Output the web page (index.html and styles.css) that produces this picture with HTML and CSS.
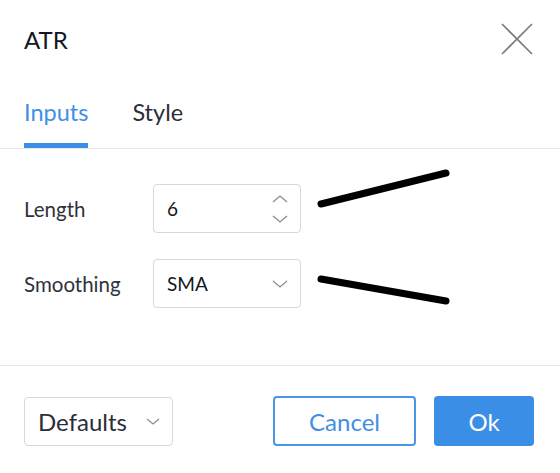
FILE: index.html
```html
<!DOCTYPE html>
<html lang="en">
<head>
<meta charset="utf-8">
<title>ATR</title>
<link rel="stylesheet" href="styles.css">
</head>
<body>
<div class="dialog">
  <header class="head">
    <h1 class="title">ATR</h1>
    <button class="close" aria-label="Close">
      <svg width="32" height="32" viewBox="0 0 32 32"><path d="M1 1 L31 31 M31 1 L1 31" stroke="#7a7a7a" stroke-width="1.6" fill="none"/></svg>
    </button>
  </header>
  <nav class="tabs">
    <span class="tab active">Inputs</span>
    <span class="tab">Style</span>
  </nav>
  <section class="content">
    <div class="row">
      <label class="label">Length</label>
      <div class="field">
        <span class="value">6</span>
        <span class="spinner">
          <svg width="16" height="8" viewBox="0 0 16 8"><path d="M1 7 L8 1 L15 7" stroke="#8a8d96" stroke-width="1.3" fill="none"/></svg>
          <svg width="16" height="8" viewBox="0 0 16 8"><path d="M1 1 L8 7 L15 1" stroke="#8a8d96" stroke-width="1.3" fill="none"/></svg>
        </span>
      </div>
    </div>
    <div class="row">
      <label class="label">Smoothing</label>
      <div class="field">
        <span class="value">SMA</span>
        <svg class="chev" width="16" height="8" viewBox="0 0 16 8"><path d="M1 1 L8 7 L15 1" stroke="#8a8d96" stroke-width="1.3" fill="none"/></svg>
      </div>
    </div>
  </section>
  <footer class="foot">
    <div class="defaults">
      <span>Defaults</span>
      <svg class="chev" width="14" height="7" viewBox="0 0 14 7"><path d="M1 1 L7 6 L13 1" stroke="#8a8d96" stroke-width="1.3" fill="none"/></svg>
    </div>
    <div class="actions">
      <button class="btn cancel">Cancel</button>
      <button class="btn ok">Ok</button>
    </div>
  </footer>
  <svg class="scribble" width="560" height="473" viewBox="0 0 560 473">
    <path d="M321 204 L446 173" stroke="#000" stroke-width="7" stroke-linecap="round" fill="none"/>
    <path d="M321 279 L446 301" stroke="#000" stroke-width="7" stroke-linecap="round" fill="none"/>
  </svg>
</div>
</body>
</html>
```

FILE: styles.css
```css
* { box-sizing: border-box; }
html, body { margin: 0; padding: 0; background: #fff; }
body { font-family: "Lato", "Liberation Sans", sans-serif; color: #131722; }

.dialog {
  position: relative;
  width: 560px;
  height: 473px;
  background: #fff;
}

.head {
  height: 78px;
  display: flex;
  align-items: center;
  justify-content: space-between;
  padding: 0 27px 0 24px;
}
.title {
  margin: 0;
  font-size: 24px;
  font-weight: 400;
  color: #131722;
}
.close {
  border: 0;
  background: none;
  padding: 0;
  width: 32px;
  height: 32px;
  display: flex;
}

.tabs {
  display: flex;
  gap: 44px;
  padding: 0 24px;
  height: 71px;
  border-bottom: 1px solid #e6e7ea;
  align-items: flex-end;
}
.tab {
  font-size: 23.5px;
  color: #2a2e39;
  line-height: 30px;
  padding-bottom: 16px;
  border-bottom: 5px solid transparent;
}
.tab.active {
  color: #3f8fe3;
  border-bottom-color: #3a8ee6;
}

.content {
  display: flex;
  flex-direction: column;
  gap: 26px;
  padding: 35px 0 57px 24px;
  border-bottom: 1px solid #e6e7ea;
}
.row {
  display: flex;
  align-items: center;
}
.label {
  width: 129px;
  font-size: 20.5px;
  color: #2f323b;
}
.field {
  width: 148px;
  height: 49px;
  border: 1px solid #d6d8dd;
  border-radius: 4px;
  display: flex;
  align-items: center;
  justify-content: space-between;
  padding: 0 12px 0 13px;
}
.value {
  font-size: 19px;
  color: #131722;
}
.spinner {
  display: flex;
  flex-direction: column;
  gap: 12px;
}
.spinner svg, .chev { display: block; }

.foot {
  display: flex;
  justify-content: space-between;
  align-items: center;
  padding: 30px 26px 0 24px;
}
.defaults {
  width: 149px;
  height: 49px;
  border: 1px solid #d6d8dd;
  border-radius: 4px;
  display: flex;
  align-items: center;
  justify-content: space-between;
  padding: 0 12px 0 13px;
  font-size: 24px;
  color: #2a2e39;
}
.actions {
  display: flex;
  gap: 18px;
}
.btn {
  height: 50px;
  border-radius: 4px;
  font-family: "Lato", "Liberation Sans", sans-serif;
  font-size: 24px;
  padding: 0;
}
.cancel {
  width: 143px;
  background: #fff;
  color: #3f8fe3;
  border: 2px solid #4a95e6;
}
.ok {
  width: 100px;
  background: #3a8ee6;
  color: #fff;
  border: 0;
}

.scribble {
  position: absolute;
  left: 0;
  top: 0;
  pointer-events: none;
}
```
